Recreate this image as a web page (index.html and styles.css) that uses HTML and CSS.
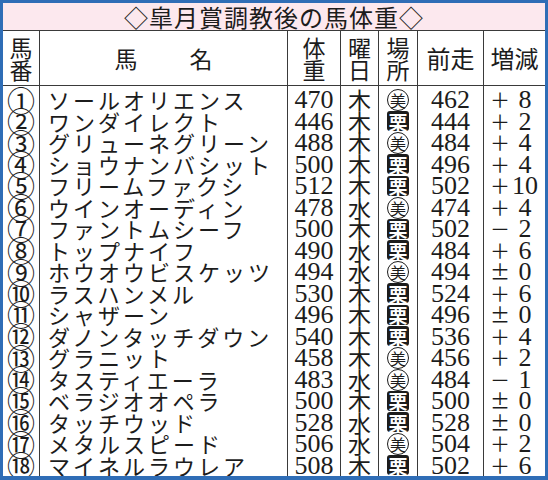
FILE: index.html
```html
<!DOCTYPE html>
<html lang="ja">
<head>
<meta charset="utf-8">
<link rel="stylesheet" href="styles.css">
</head>
<body>
<div class="sheet">
  <div class="title">◇皐月賞調教後の馬体重◇</div>
  <div class="row head">
    <div class="c no"><span>馬</span><span>番</span></div>
    <div class="c name"><span>馬</span><span>名</span></div>
    <div class="c wt"><span>体</span><span>重</span></div>
    <div class="c day"><span>曜</span><span>日</span></div>
    <div class="c place"><span>場</span><span>所</span></div>
    <div class="c prev">前走</div>
    <div class="c diff">増減</div>
  </div>
  <div class="body">
    <div class="row"><div class="c no">①</div><div class="c name">ソールオリエンス</div><div class="c wt">470</div><div class="c day">木</div><div class="c place"><span class="mi">美</span></div><div class="c prev">462</div><div class="c diff"><span class="sg">＋</span><span class="dn">8</span></div></div>
    <div class="row"><div class="c no">②</div><div class="c name">ワンダイレクト</div><div class="c wt">446</div><div class="c day">木</div><div class="c place"><span class="ri">栗</span></div><div class="c prev">444</div><div class="c diff"><span class="sg">＋</span><span class="dn">2</span></div></div>
    <div class="row"><div class="c no">③</div><div class="c name">グリューネグリーン</div><div class="c wt">488</div><div class="c day">木</div><div class="c place"><span class="mi">美</span></div><div class="c prev">484</div><div class="c diff"><span class="sg">＋</span><span class="dn">4</span></div></div>
    <div class="row"><div class="c no">④</div><div class="c name">ショウナンバシット</div><div class="c wt">500</div><div class="c day">木</div><div class="c place"><span class="ri">栗</span></div><div class="c prev">496</div><div class="c diff"><span class="sg">＋</span><span class="dn">4</span></div></div>
    <div class="row"><div class="c no">⑤</div><div class="c name">フリームファクシ</div><div class="c wt">512</div><div class="c day">木</div><div class="c place"><span class="ri">栗</span></div><div class="c prev">502</div><div class="c diff"><span class="sg">＋</span><span class="dn">10</span></div></div>
    <div class="row"><div class="c no">⑥</div><div class="c name">ウインオーディン</div><div class="c wt">478</div><div class="c day">水</div><div class="c place"><span class="mi">美</span></div><div class="c prev">474</div><div class="c diff"><span class="sg">＋</span><span class="dn">4</span></div></div>
    <div class="row"><div class="c no">⑦</div><div class="c name">ファントムシーフ</div><div class="c wt">500</div><div class="c day">木</div><div class="c place"><span class="ri">栗</span></div><div class="c prev">502</div><div class="c diff"><span class="sg">－</span><span class="dn">2</span></div></div>
    <div class="row"><div class="c no">⑧</div><div class="c name">トップナイフ</div><div class="c wt">490</div><div class="c day">水</div><div class="c place"><span class="ri">栗</span></div><div class="c prev">484</div><div class="c diff"><span class="sg">＋</span><span class="dn">6</span></div></div>
    <div class="row"><div class="c no">⑨</div><div class="c name">ホウオウビスケッツ</div><div class="c wt">494</div><div class="c day">水</div><div class="c place"><span class="mi">美</span></div><div class="c prev">494</div><div class="c diff"><span class="sg">±</span><span class="dn">0</span></div></div>
    <div class="row"><div class="c no">⑩</div><div class="c name">ラスハンメル</div><div class="c wt">530</div><div class="c day">木</div><div class="c place"><span class="ri">栗</span></div><div class="c prev">524</div><div class="c diff"><span class="sg">＋</span><span class="dn">6</span></div></div>
    <div class="row"><div class="c no">⑪</div><div class="c name">シャザーン</div><div class="c wt">496</div><div class="c day">木</div><div class="c place"><span class="ri">栗</span></div><div class="c prev">496</div><div class="c diff"><span class="sg">±</span><span class="dn">0</span></div></div>
    <div class="row"><div class="c no">⑫</div><div class="c name">ダノンタッチダウン</div><div class="c wt">540</div><div class="c day">木</div><div class="c place"><span class="ri">栗</span></div><div class="c prev">536</div><div class="c diff"><span class="sg">＋</span><span class="dn">4</span></div></div>
    <div class="row"><div class="c no">⑬</div><div class="c name">グラニット</div><div class="c wt">458</div><div class="c day">木</div><div class="c place"><span class="mi">美</span></div><div class="c prev">456</div><div class="c diff"><span class="sg">＋</span><span class="dn">2</span></div></div>
    <div class="row"><div class="c no">⑭</div><div class="c name">タスティエーラ</div><div class="c wt">483</div><div class="c day">水</div><div class="c place"><span class="mi">美</span></div><div class="c prev">484</div><div class="c diff"><span class="sg">－</span><span class="dn">1</span></div></div>
    <div class="row"><div class="c no">⑮</div><div class="c name">ベラジオオペラ</div><div class="c wt">500</div><div class="c day">木</div><div class="c place"><span class="ri">栗</span></div><div class="c prev">500</div><div class="c diff"><span class="sg">±</span><span class="dn">0</span></div></div>
    <div class="row"><div class="c no">⑯</div><div class="c name">タッチウッド</div><div class="c wt">528</div><div class="c day">水</div><div class="c place"><span class="ri">栗</span></div><div class="c prev">528</div><div class="c diff"><span class="sg">±</span><span class="dn">0</span></div></div>
    <div class="row"><div class="c no">⑰</div><div class="c name">メタルスピード</div><div class="c wt">506</div><div class="c day">水</div><div class="c place"><span class="mi">美</span></div><div class="c prev">504</div><div class="c diff"><span class="sg">＋</span><span class="dn">2</span></div></div>
    <div class="row"><div class="c no">⑱</div><div class="c name">マイネルラウレア</div><div class="c wt">508</div><div class="c day">木</div><div class="c place"><span class="ri">栗</span></div><div class="c prev">502</div><div class="c diff"><span class="sg">＋</span><span class="dn">6</span></div></div>
  </div>
</div>
</body>
</html>
```
FILE: styles.css
```css
html, body {
  margin: 0;
  padding: 0;
  background: #ffffff;
}
.sheet {
  width: 548px;
  height: 480px;
  box-sizing: border-box;
  border-style: solid;
  border-color: #2f6db6;
  border-width: 3px 3px 4px 3px;
  background: #ffffff;
  color: #1c1c1c;
  font-family: "Noto Sans CJK JP", "Noto Sans", sans-serif;
  overflow: hidden;
}
.title {
  height: 27px;
  line-height: 27px;
  background: #fce8ee;
  border-bottom: 1px solid #3a3a3a;
  text-align: center;
  font-size: 24px;
  letter-spacing: 1px;
  overflow: hidden;
}
.row {
  display: grid;
  grid-template-columns: 36px 248px 53px 38px 39px 66px 62px;
  height: 21.5px;
}
.c {
  border-left: 1px solid #3a3a3a;
  display: flex;
  align-items: center;
  justify-content: center;
  white-space: nowrap;
  line-height: 21.5px;
}
.c.no {
  border-left: 0;
}
.head {
  height: 54px;
  border-bottom: 1px solid #3a3a3a;
}
.head .c {
  font-size: 23px;
  flex-direction: column;
  line-height: 22px;
}
.head .c.name {
  flex-direction: row;
  gap: 52px;
  justify-content: center;
}
.head .c.prev,
.head .c.diff {
  flex-direction: row;
  font-size: 24px;
}
.body .row:first-child {
  height: 24.5px;
}
.body .row:first-child .c {
  padding-top: 3px;
}
.body .c {
  font-size: 23px;
}
.body .c.no {
  font-size: 28px;
  line-height: 21px;
}
.body .c.name {
  justify-content: flex-start;
  padding-left: 8px;
  font-size: 22px;
  letter-spacing: 3px;
}
.body .c.wt,
.body .c.prev {
  font-family: "Liberation Serif", serif;
  font-size: 26px;
}
.mi {
  display: inline-flex;
  align-items: center;
  justify-content: center;
  width: 22px;
  height: 22px;
  border: 1.5px solid #1c1c1c;
  border-radius: 50%;
  font-size: 16px;
  line-height: 1;
  box-sizing: border-box;
}
.ri {
  display: inline-flex;
  align-items: center;
  justify-content: center;
  width: 22px;
  height: 20px;
  background: #1c1c1c;
  color: #ffffff;
  border-radius: 3px;
  font-size: 19px;
  font-weight: 700;
  line-height: 1;
}
.body .c.diff {
  justify-content: flex-start;
  padding-left: 6px;
}
.sg {
  width: 20px;
  text-align: center;
  font-size: 20px;
}
.dn {
  width: 30px;
  text-align: center;
  font-family: "Liberation Serif", serif;
  font-size: 26px;
}
```
